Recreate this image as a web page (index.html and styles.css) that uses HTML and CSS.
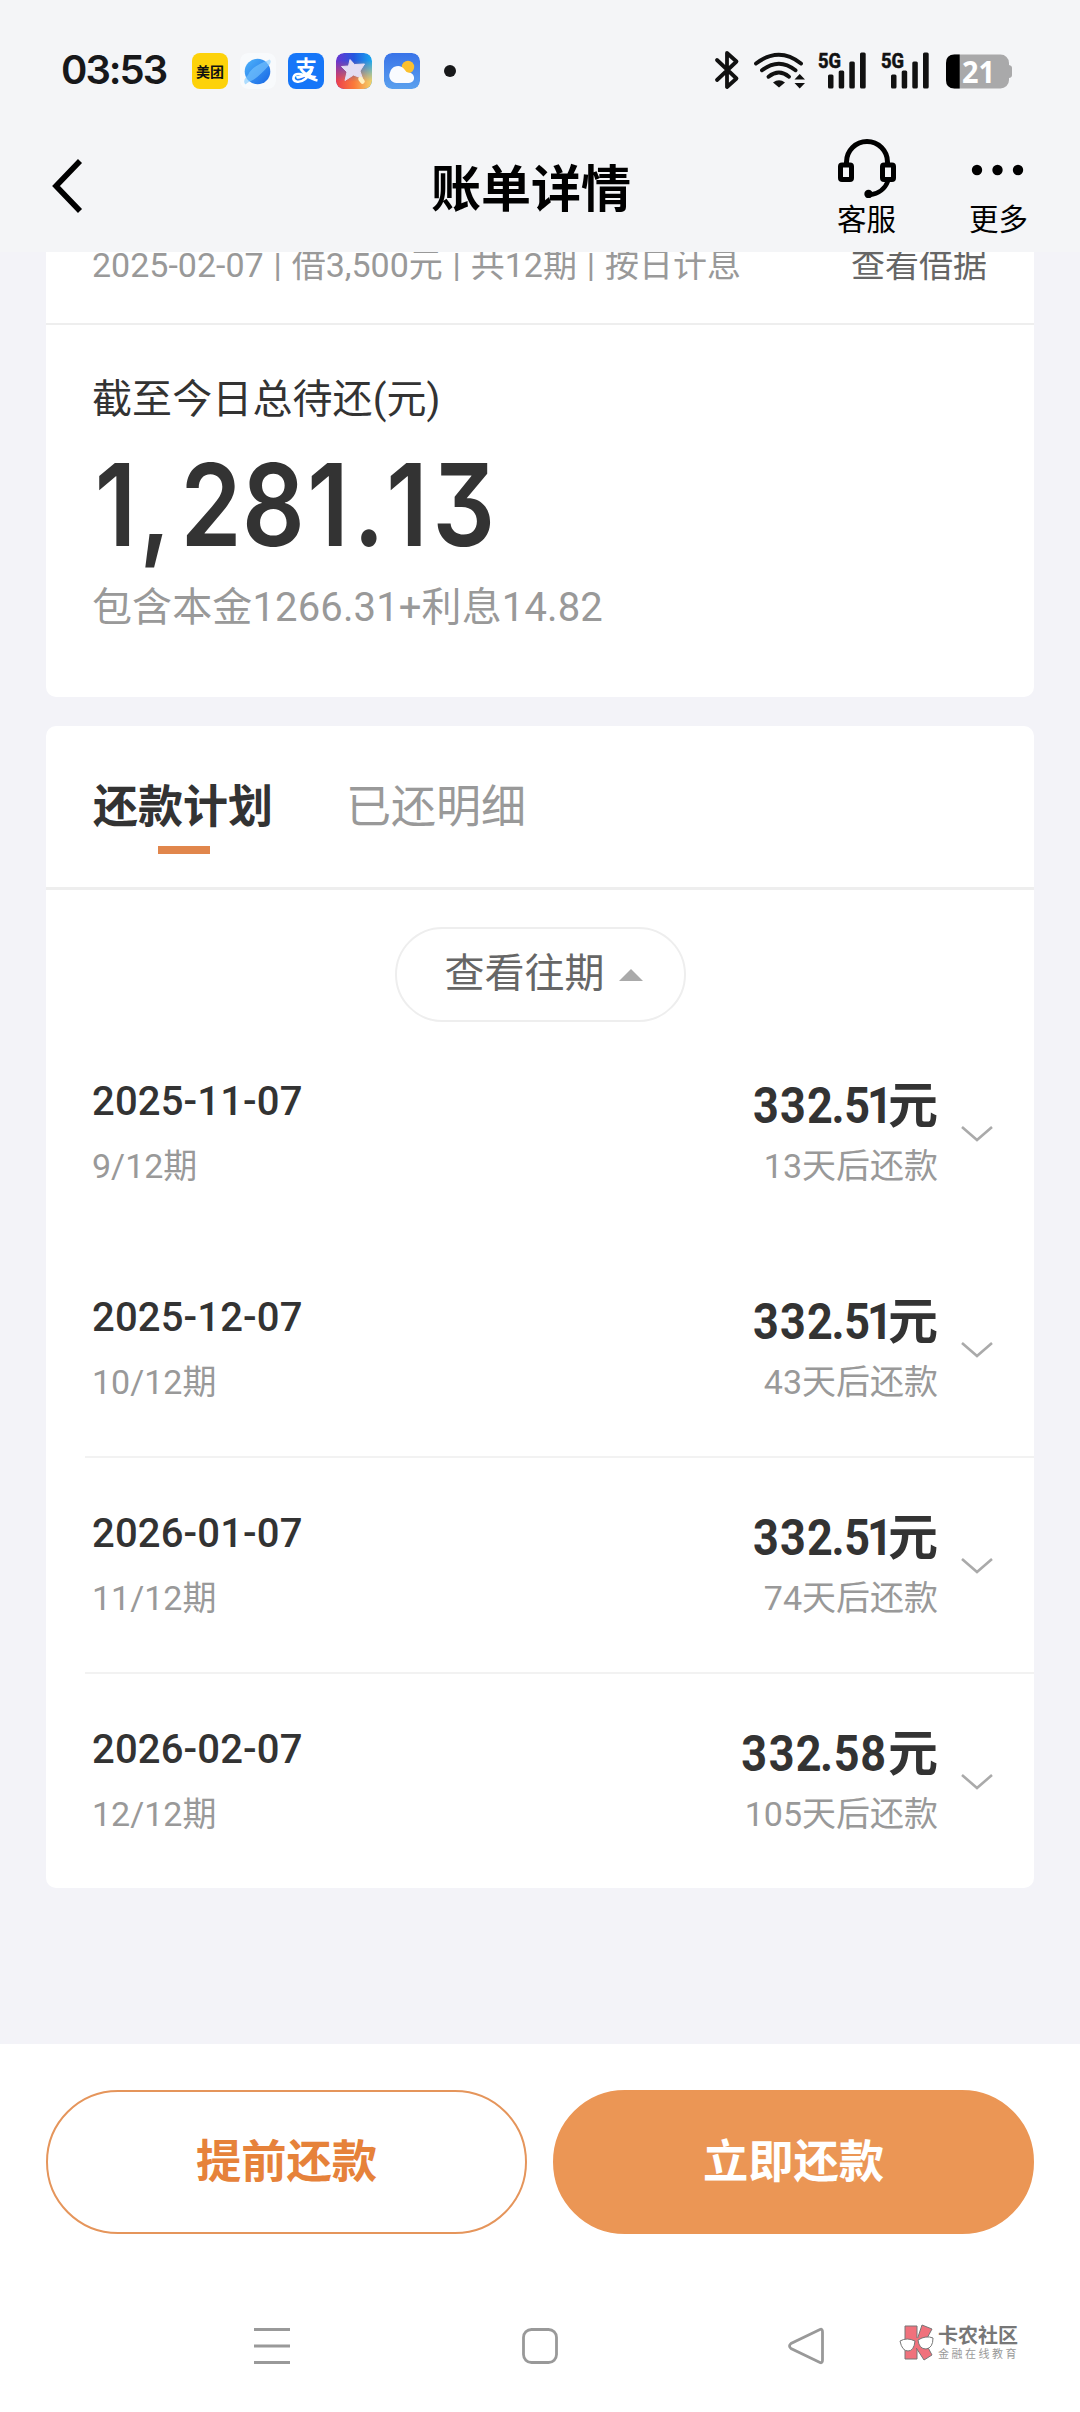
FILE: index.html
```html
<!DOCTYPE html>
<html lang="zh-CN">
<head>
<meta charset="utf-8">
<title>账单详情</title>
<link rel="stylesheet" href="styles.css">
</head>
<body>
<div class="screen">
  <div class="status">
    <span class="clock">03:53</span>
    <div class="apps">
      <span class="app meituan">美团</span>
      <svg class="app" viewBox="0 0 36 36">
        <defs>
          <linearGradient id="planet" x1="0" y1="0" x2="1" y2="1"><stop offset="0" stop-color="#4fb4fb"/><stop offset="1" stop-color="#1766e4"/></linearGradient>
        </defs>
        <rect width="36" height="36" rx="8" fill="#f8fafc"/>
        <circle cx="17.500" cy="18.500" r="12.800" fill="url(#planet)"/>
        <path d="M5 31 C3 28 5 25 8 22 C11 14 24 9 29.500 6.500 C32 8 30 12 27.500 14 C23 19 16 26 11 28 S6 32 5 31Z" fill="#7cc8ff" opacity=".6"/>
      </svg>
      <span class="app alipay">支<svg viewBox="0 0 36 36"><path d="M24 17 C21 24 14 30 8.500 28.500 C3.500 27 5 20.500 11 21 C17 21.500 23 26 29.500 27.500" fill="none" stroke="#fff" stroke-width="2.600"/></svg></span>
      <svg class="app" viewBox="0 0 36 36">
        <defs>
          <linearGradient id="rain" x1="0" y1="0" x2="1" y2="0"><stop offset="0" stop-color="#6a35d0"/><stop offset=".5" stop-color="#2457df"/><stop offset="1" stop-color="#19a8f0"/></linearGradient>
          <linearGradient id="warm" x1="0" y1="0" x2="1" y2="0"><stop offset="0" stop-color="#ec3f4e"/><stop offset=".5" stop-color="#fb7a3a"/><stop offset="1" stop-color="#f2d36a"/></linearGradient>
          <linearGradient id="fade" x1="0" y1="0" x2="0" y2="1"><stop offset=".2" stop-color="#000"/><stop offset=".8" stop-color="#fff"/></linearGradient>
          <mask id="low"><rect width="36" height="36" fill="url(#fade)"/></mask>
        </defs>
        <rect width="36" height="36" rx="8" fill="url(#rain)"/>
        <rect width="36" height="36" rx="8" fill="url(#warm)" mask="url(#low)"/>
        <path d="M14 6.500 L18.500 11.500 L28.500 11 L24 18 L26.500 25.500 L17.500 22 L9 27.500 L11 19 L5.500 13.500 L12.500 13Z" fill="#e3dcf2" stroke="#e3dcf2" stroke-linejoin="round"/>
        <path d="M24.500 26 L26.500 28.500" stroke="#fff0c0" stroke-width="4.500" stroke-linecap="round"/>
      </svg>
      <svg class="app" viewBox="0 0 36 36">
        <defs><linearGradient id="sky" x1="0" y1="0" x2="0" y2="1"><stop offset="0" stop-color="#3973e8"/><stop offset="1" stop-color="#5aa0ee"/></linearGradient></defs>
        <rect width="36" height="36" rx="8" fill="url(#sky)"/>
        <circle cx="24" cy="14" r="6.200" fill="#fbc02f"/>
        <path d="M12.500 30 A7.300 7.300 0 0 1 6 19.500 A8 8 0 0 1 20.500 16.500 Q22 19.500 25 19.800 A5 5 0 0 1 25 30Z" fill="#f9fbff"/>
      </svg>
    </div>
    <span class="more-dot"></span>
    <svg class="signals" viewBox="0 0 300 38">
      <path d="M3 9 L22.500 27.500 L13 36 V2 L22.500 10.500 L3 29" fill="none" stroke="#111" stroke-width="3.800" stroke-linejoin="round" stroke-linecap="round"/>
      <g fill="none" stroke="#111" stroke-width="3.900" stroke-linecap="round">
        <path d="M42 12.500 Q65 -5 87 12.500"/>
        <path d="M48 19.300 Q65 6 81.500 19.300"/>
        <path d="M54.500 25.700 Q65 17.500 75 25.700"/>
      </g>
      <path d="M59 31.500 Q65 27 71 31.500 L65 36.500Z" fill="#111"/>
      <path d="M85.700 23 L91 28.500 H80.500Z M85.700 37.500 L91 32 H80.500Z" fill="#111"/>
      <g id="cell">
        <text x="104" y="16.500" class="net" textLength="23" lengthAdjust="spacingAndGlyphs">5G</text>
        <rect x="114" y="23.500" width="5.500" height="14" rx="1.500"/><rect x="124.700" y="19.500" width="5.500" height="18" rx="1.500"/><rect x="135.300" y="10.500" width="5.500" height="27" rx="1.500"/><rect x="146" y="1.500" width="5.700" height="36" rx="1.500"/>
      </g>
      <use href="#cell" x="63"/>
      <rect x="232" y="3.500" width="63" height="34" rx="8.500" fill="#a9a9aa"/>
      <path d="M295 14 Q298 14.500 298 17 V24 Q298 26.500 295 27Z" fill="#a9a9aa"/>
      <path d="M245.700 3.500 H240.500 Q232 3.500 232 12 V29 Q232 37.500 240.500 37.500 H245.700Z" fill="#000"/>
      <text x="248" y="32" class="level" textLength="33" lengthAdjust="spacingAndGlyphs">21</text>
    </svg>
  </div>

  <div class="header">
    <svg class="back" viewBox="0 0 34 58"><path d="M30 4 L6 29 L30 54" fill="none" stroke="#000" stroke-width="5.600"/></svg>
    <h1>账单详情</h1>
    <div class="tool">
      <svg viewBox="0 0 60 60"><g fill="none" stroke="#000" stroke-width="5"><path d="M10.500 27 V24 A20.500 20.500 0 0 1 51.500 24 V27"/><rect x="4.500" y="27" width="11" height="14.500" rx="1.500"/><rect x="46.500" y="27" width="11" height="14.500" rx="1.500"/><path d="M52 43 Q47.500 55 33.500 57" stroke-width="4.500"/></g><circle cx="32.500" cy="56" r="4.200"/></svg>
      <span>客服</span>
    </div>
    <div class="tool">
      <svg viewBox="0 0 60 60"><circle cx="9" cy="32" r="5.200"/><circle cx="29.500" cy="32" r="5.200"/><circle cx="50" cy="32" r="5.200"/></svg>
      <span>更多</span>
    </div>
  </div>

  <div class="content">
    <section class="card summary">
      <div class="loan"><span>2025-02-07 | 借3,500元 | 共12期 | 按日计息</span><a>查看借据</a></div>
      <div class="due">
        <p class="label">截至今日总待还(元)</p>
        <svg class="total" viewBox="0 0 420 120"><text transform="scale(.86 1)" y="106" x="28.500 74.500 139.500 212.200 275.700 323 367.500 433.500">1,281.13</text></svg>
        <p class="parts">包含本金1266.31+利息14.82</p>
      </div>
    </section>

    <section class="card plan">
      <div class="tabs"><span class="tab active">还款计划</span><span class="tab">已还明细</span></div>
      <div class="past"><button>查看往期<i></i></button></div>
      <div class="row plain">
        <div><p class="date">2025-11-07</p><p class="sub">9/12期</p></div>
        <div class="right"><p class="amount"><svg viewBox="0 0 150 60"><text transform="scale(.9 1)" y="47" x="31.100 61.100 91.100 111.100 132.500 157.800">332.51</text></svg>元</p><p class="sub">13天后还款</p></div>
        <svg class="chev" viewBox="0 0 34 18"><path d="M2 2 L17 15 L32 2"/></svg>
      </div>
      <div class="row">
        <div><p class="date">2025-12-07</p><p class="sub">10/12期</p></div>
        <div class="right"><p class="amount"><svg viewBox="0 0 150 60"><text transform="scale(.9 1)" y="47" x="31.100 61.100 91.100 111.100 132.500 157.800">332.51</text></svg>元</p><p class="sub">43天后还款</p></div>
        <svg class="chev" viewBox="0 0 34 18"><path d="M2 2 L17 15 L32 2"/></svg>
      </div>
      <div class="row">
        <div><p class="date">2026-01-07</p><p class="sub">11/12期</p></div>
        <div class="right"><p class="amount"><svg viewBox="0 0 150 60"><text transform="scale(.9 1)" y="47" x="31.100 61.100 91.100 111.100 132.500 157.800">332.51</text></svg>元</p><p class="sub">74天后还款</p></div>
        <svg class="chev" viewBox="0 0 34 18"><path d="M2 2 L17 15 L32 2"/></svg>
      </div>
      <div class="row plain">
        <div><p class="date">2026-02-07</p><p class="sub">12/12期</p></div>
        <div class="right"><p class="amount"><svg viewBox="0 0 150 60"><text transform="scale(.9 1)" y="47" x="18 48.600 78.400 98.300 120.600 150.300">332.58</text></svg>元</p><p class="sub">105天后还款</p></div>
        <svg class="chev" viewBox="0 0 34 18"><path d="M2 2 L17 15 L32 2"/></svg>
      </div>
    </section>
  </div>

  <div class="footer">
    <div class="actions"><button class="early">提前还款</button><button class="now">立即还款</button></div>
    <div class="nav">
      <svg viewBox="0 0 40 40"><path d="M2 3.500 H38 M2 20 H38 M2 36.500 H38"/></svg>
      <svg viewBox="0 0 40 40"><rect x="3.500" y="3.500" width="33" height="33" rx="8"/></svg>
      <svg viewBox="0 0 40 40"><path d="M32 3.500 Q34.500 2.500 34.500 6 V34 Q34.500 37.500 32 36.500 L3 22.500 Q0 20 3 17.500Z"/></svg>
    </div>
    <div class="brand">
      <svg viewBox="0 0 36 38"><g fill="#f0717c" stroke="#777" stroke-width="1"><path d="M6 2 H18 V35 H6Z"/><path d="M23 1 L33 5 L26 18 L33 31 L25 36 L16 22Z"/></g><path d="M14 14 H22 V24 H14Z" fill="#f0717c"/><g fill="#fff" stroke="#777"><path d="M1 17 Q8 13 16 17 Q15 27 9 27 Q3 27 1 17Z"/><path d="M19 16 Q27 11 34 14 Q34 24 27 25 Q20 25 19 16Z"/></g></svg>
      <div><b>卡农社区</b><small>金融在线教育</small></div>
    </div>
  </div>
</div>
</body>
</html>
```
FILE: styles.css
```css
* { box-sizing: border-box; margin: 0; padding: 0; }
body { background: #f3f3f8; font-family: Roboto, "Noto Sans CJK SC", sans-serif; color: #333; }
.screen { width: 1080px; height: 2412px; display: flex; flex-direction: column; overflow: hidden; }
p { white-space: nowrap; }
button { font-family: inherit; background: none; }

.status { height: 142px; background: #f4f5f7; display: flex; align-items: center; padding-left: 61px; }
.clock { width: 131px; font: 600 40px/48px Inter, sans-serif; letter-spacing: -2px; color: #17181a; margin-top: -3px; }
.apps { display: flex; gap: 12px; }
.app { width: 36px; height: 36px; display: block; border-radius: 8px; }
.meituan { background: #fdd20a; color: #111; font: 700 14px/36px "Noto Sans CJK SC", sans-serif; text-align: center; }
.alipay { position: relative; background: #1676f8; color: #fff; font: 700 22px/26px "Noto Sans CJK SC", sans-serif; text-align: center; }
.alipay svg { position: absolute; inset: 0; }
.more-dot { width: 12px; height: 12px; border-radius: 50%; background: #17181a; margin-left: 24px; }
.signals { width: 300px; height: 38px; margin-left: 258px; margin-top: -3px; fill: #111; overflow: visible; }
.net { font: 700 21px Roboto, sans-serif; stroke: #111; stroke-width: .6px; }
.level { font: 700 31px "Open Sans", sans-serif; fill: #fff; }

.header { height: 110px; background: #f4f5f7; display: flex; padding-left: 50px; color: #000; }
.back { width: 34px; height: 58px; margin-top: 15px; }
h1 { margin-left: 347px; width: 405px; font-size: 50px; line-height: 74px; margin-top: 11px; font-weight: 700; }
.tool { width: 60px; margin-right: 72px; }
.tool svg { width: 60px; height: 60px; display: block; margin-top: -4px; }
.tool span { display: block; font-size: 29.5px; line-height: 40px; margin-top: 2px; margin-left: 1px; white-space: nowrap; }
.tool:last-child { margin-right: 0; }

.content { flex: 1; padding: 0 46px; }
.card { background: #fff; border-radius: 10px; }
.summary { height: 445px; border-radius: 0 0 10px 10px; }
/* the loan line is scrolled partly under the header */
.loan { height: 73px; border-bottom: 2px solid #eee; padding: 0 46px; display: flex; justify-content: space-between; font-size: 34px; line-height: 40px; color: #999; overflow: hidden; }
.loan span, .loan a { margin-top: -7px; white-space: nowrap; }
.loan span { word-spacing: 1.4px; }
.loan a { color: #666; margin-right: 1px; }
.due { padding: 45px 46px 0; }
.label { font-size: 40px; line-height: 60px; letter-spacing: .1px; }
.total { display: block; width: 420px; height: 120px; margin: 10px 0 0 -1px; font: 600 114px Inter, sans-serif; font-feature-settings: "cv09"; fill: #333; text-anchor: middle; overflow: visible; }
.parts { font-size: 40px; line-height: 60px; color: #999; margin-top: 18px; letter-spacing: .12px; }

.plan { margin-top: 29px; height: 1162px; }
.tabs { height: 164px; border-bottom: 3px solid #eee; padding: 48px 47px 0; display: flex; gap: 73px; }
.tab { font-size: 45px; line-height: 68px; color: #999; display: flex; flex-direction: column; height: 81px; }
.active { color: #333; font-weight: 700; }
.active::after { content: ""; width: 52px; height: 8px; background: #e1864c; align-self: center; margin: 4px 0 0 1px; }
.past { height: 135px; padding-top: 37px; display: flex; justify-content: center; }
.past button { width: 291px; height: 95px; border: 2px solid #eee; border-radius: 48px; color: #666; font-size: 40px; line-height: 60px; display: flex; align-items: center; justify-content: center; gap: 14px; padding: 0 0 2px 7px; }
.past i { border: 12px solid transparent; border-top: 0; border-bottom: 12px solid #aaa; margin-top: 2px; }
.row { height: 216px; margin-left: 39px; padding: 46px 40px 0 7px; border-bottom: 2px solid #f2f2f2; display: flex; position: relative; top: 1px; }
.plain { border-bottom-color: transparent; }
.date { font-size: 40px; line-height: 60px; font-weight: 500; letter-spacing: .15px; }
.sub { font-size: 34px; line-height: 50px; color: #999; margin-top: 9px; }
.right { margin-left: auto; }
.right .sub { text-align: right; }
.amount { font-size: 50px; line-height: 60px; height: 60px; font-weight: 700; display: flex; justify-content: flex-end; padding-top: 4px; }
.amount svg { width: 150px; height: 60px; fill: #333; text-anchor: middle; overflow: visible; }
.chev { width: 34px; height: 18px; margin: 53px 0 0 22px; fill: none; stroke: #aaa; stroke-width: 2.6; }

.footer { height: 368px; background: #fff; position: relative; }
.actions { display: flex; gap: 26px; padding: 46px 46px 0; }
.actions button { flex: 1; height: 144px; border-radius: 72px; font-size: 45.3px; font-weight: 700; border: 2px solid #e5955b; color: #e6823a; padding-bottom: 8px; }
.actions .now { background: #eb9655; border-color: #eb9655; color: #fff; }
.nav { display: flex; margin: 92px 0 0 252px; gap: 228px; }
.nav svg { width: 40px; height: 40px; fill: none; stroke: #999; stroke-width: 2.8; }
.brand { position: absolute; left: 899px; top: 280px; display: flex; gap: 3px; }
.brand svg { width: 36px; height: 38px; }
.brand b { display: block; font-size: 20px; line-height: 24px; color: #777; white-space: nowrap; }
.brand small { display: block; font-size: 11px; line-height: 14px; letter-spacing: 2.5px; color: #999; white-space: nowrap; }
```
